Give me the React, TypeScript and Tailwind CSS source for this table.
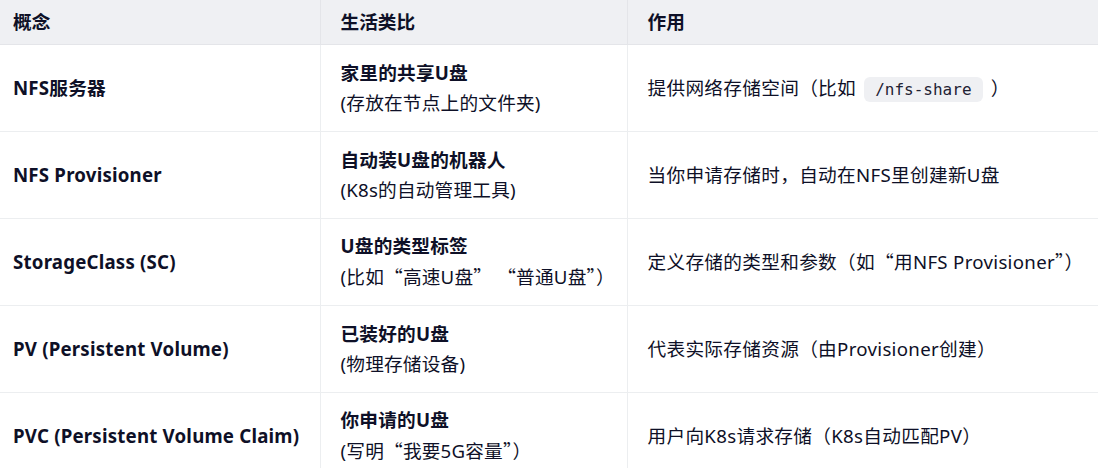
import React from "react";

const cjk = { fontFamily: '"Noto Sans CJK SC", sans-serif' };
const Q = ({ c }: { c: string }) => <span style={cjk}>{c}</span>;

const rows: { a: string; b1: string; b2: React.ReactNode; c: React.ReactNode }[] = [
  {
    a: "NFS服务器",
    b1: "家里的共享U盘",
    b2: "(存放在节点上的文件夹)",
    c: (
      <>
        提供网络存储空间（比如{" "}
        <code
          className="mx-[3px] rounded-[6px] bg-[#eff0f3] px-[11px] py-[3px] text-[16px] tracking-normal text-[#1f2233]"
          style={{ fontFamily: '"DejaVu Sans Mono", "Liberation Mono", monospace' }}
        >
          /nfs-share
        </code>{" "}
        ）
      </>
    ),
  },
  {
    a: "NFS Provisioner",
    b1: "自动装U盘的机器人",
    b2: "(K8s的自动管理工具)",
    c: "当你申请存储时，自动在NFS里创建新U盘",
  },
  {
    a: "StorageClass (SC)",
    b1: "U盘的类型标签",
    b2: (
      <>
        (比如<Q c="“" />高速U盘<Q c="”" /> <Q c="“" />普通U盘<Q c="”" />）
      </>
    ),
    c: (
      <>
        定义存储的类型和参数（如<Q c="“" />用NFS Provisioner<Q c="”" />）
      </>
    ),
  },
  {
    a: "PV (Persistent Volume)",
    b1: "已装好的U盘",
    b2: "(物理存储设备)",
    c: "代表实际存储资源（由Provisioner创建）",
  },
  {
    a: "PVC (Persistent Volume Claim)",
    b1: "你申请的U盘",
    b2: (
      <>
        (写明<Q c="“" />我要5G容量<Q c="”" />）
      </>
    ),
    c: "用户向K8s请求存储（K8s自动匹配PV）",
  },
];

export default function App() {
  return (
    <div
      className="h-[468px] w-[1098px] overflow-hidden bg-white text-[18.67px] text-[#0e1027]"
      style={{ fontFamily: '"Noto Sans", "Noto Sans CJK SC", sans-serif' }}
    >
      <table className="w-[1098px] table-fixed border-collapse">
        <colgroup>
          <col className="w-[320px]" />
          <col className="w-[307px]" />
          <col />
        </colgroup>
        <thead>
          <tr className="h-[44px] border-b border-[#e4e5e9] bg-[#eff0f3]">
            <th className="pl-[13px] text-left font-bold">概念</th>
            <th className="border-l border-[#e4e5e9] pl-[20px] text-left font-bold">生活类比</th>
            <th className="border-l border-[#e4e5e9] pl-[20px] text-left font-bold">作用</th>
          </tr>
        </thead>
        <tbody>
          {rows.map((r, i) => (
            <tr key={i} className="h-[87px] border-b border-[#eceef0]">
              <td className="whitespace-nowrap pl-[13px] align-middle font-bold tracking-[0.2px]">{r.a}</td>
              <td className="whitespace-nowrap border-l border-[#eceef0] pl-[20px] align-middle leading-[30px] tracking-[0.2px]">
                <div className="font-bold">{r.b1}</div>
                <div>{r.b2}</div>
              </td>
              <td className="whitespace-nowrap border-l border-[#eceef0] pl-[20px] align-middle tracking-[0.3px]">{r.c}</td>
            </tr>
          ))}
        </tbody>
      </table>
    </div>
  );
}
